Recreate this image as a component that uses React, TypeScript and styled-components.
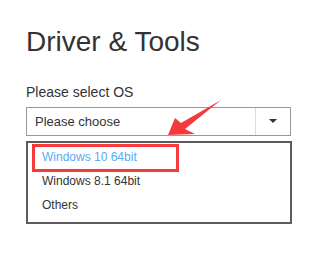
import styled, { createGlobalStyle } from 'styled-components';

const GlobalStyle = createGlobalStyle`
  body {
    margin: 0;
    background: #fff;
    font-family: 'Liberation Sans', Arial, sans-serif;
    color: #333;
  }
`;

const options = ['Windows 10 64bit', 'Windows 8.1 64bit', 'Others'];

const App = () => {
  return (
    <>
      <GlobalStyle />
      <Page>
        <Title>Driver &amp; Tools</Title>
        <Label>Please select OS</Label>
        <Select>
          <span className='value'>Please choose</span>
          <Caret />
        </Select>
        <List>
          {options.map((name, i) => (
            <Item key={name} $active={i === 0}>
              {name}
            </Item>
          ))}
        </List>
        <Arrow width='65' height='45' viewBox='0 0 65 45'>
          <polygon points='8,40 15,23 21,28 61,5 25,34 35,39' fill='#f43a3a' />
        </Arrow>
      </Page>
    </>
  );
};

const Page = styled.div`
  position: relative;
  width: 322px;
  height: 278px;
  padding: 25px 0 0 26px;
  box-sizing: border-box;
`;

const Title = styled.h1`
  margin: 0;
  font-size: 28px;
  line-height: 1.2;
  font-weight: normal;
  color: #333;
`;

const Label = styled.div`
  margin-top: 25px;
  font-size: 14px;
  line-height: 16px;
  color: #333;
`;

const Select = styled.div`
  margin-top: 7px;
  width: 265px;
  height: 29px;
  box-sizing: border-box;
  border: 1px solid #999;
  display: flex;
  align-items: stretch;
  .value {
    flex: 1;
    display: flex;
    align-items: center;
    padding-left: 8px;
    font-size: 13px;
    color: #333;
  }
`;

const Caret = styled.div`
  width: 34px;
  border-left: 1px solid #ddd;
  display: flex;
  align-items: center;
  justify-content: center;
  &::before {
    content: '';
    border-left: 4px solid transparent;
    border-right: 4px solid transparent;
    border-top: 4px solid #333;
  }
`;

const List = styled.div`
  margin-top: 5px;
  width: 266px;
  box-sizing: border-box;
  border: 2px solid #5c5c5c;
  padding: 2px 0 5px;
`;

const Item = styled.div<{ $active?: boolean }>`
  position: relative;
  height: 24px;
  line-height: 24px;
  padding-left: 14px;
  font-size: 12px;
  color: ${(p) => (p.$active ? '#5aaaf6' : '#333')};
  &::after {
    content: '';
    display: ${(p) => (p.$active ? 'block' : 'none')};
    position: absolute;
    left: 4px;
    top: -1px;
    width: 147px;
    height: 28px;
    box-sizing: border-box;
    border: 3px solid #f43a3a;
  }
`;

const Arrow = styled.svg`
  position: absolute;
  left: 160px;
  top: 95px;
`;

export default App;
